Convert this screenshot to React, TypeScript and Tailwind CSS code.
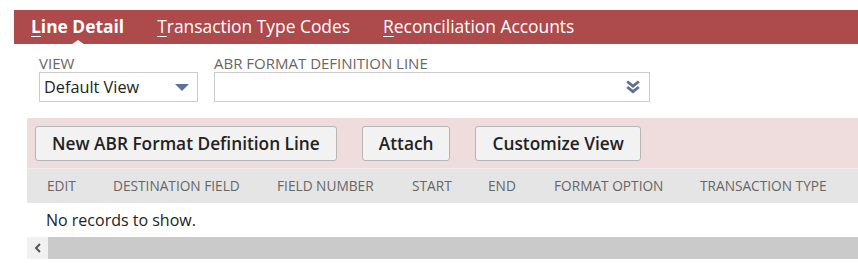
const columns = [
  { label: 'EDIT', w: 'w-[66px]' },
  { label: 'DESTINATION FIELD', w: 'w-[164px]' },
  { label: 'FIELD NUMBER', w: 'w-[135px]' },
  { label: 'START', w: 'w-[76px]' },
  { label: 'END', w: 'w-[66px]' },
  { label: 'FORMAT OPTION', w: 'w-[146px]' },
  { label: 'TRANSACTION TYPE', w: 'w-[160px]' },
];

const buttons = ['New ABR Format Definition Line', 'Attach', 'Customize View'];

export default function App() {
  return (
    <div className="w-[858px] h-[269px] bg-white overflow-hidden font-['Open_Sans',sans-serif] pt-[10px]">
      {/* Tabs */}
      <div className="ml-[14px] h-[34px] bg-[#ad4a4b] flex items-center text-white text-[17.4px] leading-none">
        <div className="relative ml-[17px] font-bold">
          <span className="underline underline-offset-[3px] decoration-1">L</span>ine Detail
          <div className="absolute left-[37px] top-[22px] w-0 h-0 border-x-[10px] border-x-transparent border-b-[7px] border-b-white" />
        </div>
        <div className="ml-[33px]">
          <span className="underline underline-offset-[3px] decoration-1">T</span>ransaction Type Codes
        </div>
        <div className="ml-[33px]">
          <span className="underline underline-offset-[3px] decoration-1">R</span>econciliation Accounts
        </div>
      </div>

      {/* Filters */}
      <div className="flex gap-[16px] ml-[39px] mt-[10px]">
        <div className="flex flex-col">
          <span className="text-[15px] leading-[18px] text-[#666]">VIEW</span>
          <div className="w-[159px] h-[30px] border border-[#ccc] flex items-center justify-between pl-[4px] pr-[8px]">
            <span className="text-[16.3px] text-[#222] pt-[1px]">Default View</span>
            <svg width="14" height="7" viewBox="0 0 14 7">
              <path d="M0 0H14L7 7Z" fill="#5b7195" />
            </svg>
          </div>
        </div>
        <div className="flex flex-col">
          <span className="text-[15px] leading-[18px] text-[#666]">ABR FORMAT DEFINITION LINE</span>
          <div className="w-[436px] h-[30px] border border-[#ccc] flex items-center justify-end pr-[9px]">
            <svg width="14" height="14" viewBox="0 0 14 14">
              <path d="M1.2 1.5L7 6.2L12.8 1.5M1.2 7L7 11.7L12.8 7" fill="none" stroke="#5b7195" strokeWidth="2.8" />
            </svg>
          </div>
        </div>
      </div>

      {/* List */}
      <div className="ml-[27px] mt-[16px]">
        <div className="h-[51px] bg-[#efdcdc] flex items-center gap-[25px] pl-[8px] pt-[1px] border-b border-[#f3ecec]">
          {buttons.map((b) => (
            <button
              key={b}
              className="h-[35px] px-[16px] rounded-[3px] border border-[#b5b5b5] bg-[#f2f2f2] text-[17.3px] font-semibold text-[#222]"
            >
              {b}
            </button>
          ))}
        </div>
        <div className="h-[34px] bg-[#e5e5e5] flex items-center pl-[20px] text-[13.7px] text-[#666]">
          {columns.map((c) => (
            <div key={c.label} className={`${c.w} shrink-0`}>
              {c.label}
            </div>
          ))}
        </div>
        <div className="h-[34px] flex items-center pl-[19px] text-[16px] text-[#222]">
          No records to show.
        </div>
        <div className="h-[22px] bg-[#cacaca] flex">
          <div className="w-[21px] h-full bg-[#f1f1f1] flex items-center justify-center">
            <svg width="8" height="10" viewBox="0 0 8 10">
              <path d="M6 1L2 5L6 9" fill="none" stroke="#555" strokeWidth="2" />
            </svg>
          </div>
        </div>
      </div>
    </div>
  );
}
